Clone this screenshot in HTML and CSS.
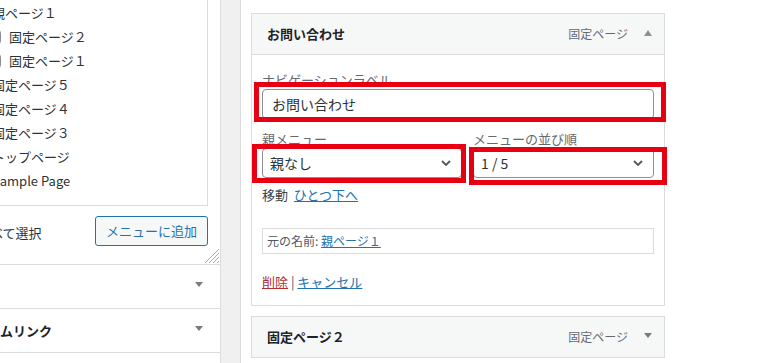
FILE: index.html
```html
<!doctype html>
<html>
<head>
<meta charset="utf-8">
<link rel="stylesheet" href="styles.css">
</head>
<body>
<div class="screen">
	<div class="side">
		<div class="side-inner">
			<div class="picker">
				<ul class="pages">
					<li><span class="cb"></span>親ページ１</li>
					<li class="child"><span class="cb"></span>固定ページ２</li>
					<li class="child"><span class="cb"></span>固定ページ１</li>
					<li><span class="cb"></span>固定ページ５</li>
					<li><span class="cb"></span>固定ページ４</li>
					<li><span class="cb"></span>固定ページ３</li>
					<li><span class="cb"></span>トップページ</li>
					<li><span class="cb"></span>Sample Page</li>
				</ul>
				<div class="picker-actions">
					<label class="select-all"><span class="cb"></span>すべて選択</label>
					<button class="btn">メニューに追加</button>
				</div>
				<svg class="grip" width="14" height="14" viewBox="0 0 14 14">
					<line x1="14" y1="0" x2="0" y2="14"/>
					<line x1="14" y1="4" x2="4" y2="14"/>
					<line x1="14" y1="8" x2="8" y2="14"/>
					<line x1="14" y1="12" x2="12" y2="14"/>
				</svg>
			</div>
			<div class="acc"><h3>投稿</h3><span class="tri"></span></div>
			<div class="acc"><h3>カスタムリンク</h3><span class="tri"></span></div>
			<div class="acc"><h3>カテゴリー</h3><span class="tri"></span></div>
		</div>
	</div>

	<div class="edit">
		<div class="item open">
			<div class="item-head">
				<span class="item-title">お問い合わせ</span>
				<span class="item-type">固定ページ</span>
				<span class="tri up"></span>
			</div>
			<div class="item-body">
				<label class="field">
					<span class="desc">ナビゲーションラベル</span>
					<input class="text" value="お問い合わせ">
				</label>
				<div class="field-row">
					<div class="field">
						<span class="desc">親メニュー</span>
						<div class="select"><span>親なし</span><svg width="10" height="6" viewBox="0 0 10 6"><polyline points="1,1 5,5 9,1"/></svg></div>
					</div>
					<div class="field">
						<span class="desc">メニューの並び順</span>
						<div class="select"><span>1 / 5</span><svg width="10" height="6" viewBox="0 0 10 6"><polyline points="1,1 5,5 9,1"/></svg></div>
					</div>
				</div>
				<p class="move">移動&nbsp; <a href="#">ひとつ下へ</a></p>
				<p class="original">元の名前: <a href="#">親ページ１</a></p>
				<p class="actions"><a class="delete" href="#">削除</a> | <a href="#">キャンセル</a></p>
			</div>
			<span class="mark mark-label"></span>
			<span class="mark mark-parent"></span>
			<span class="mark mark-order"></span>
		</div>

		<div class="item">
			<div class="item-head">
				<span class="item-title">固定ページ２</span>
				<span class="item-type">固定ページ</span>
				<span class="tri"></span>
			</div>
		</div>
	</div>
</div>
</body>
</html>
```

FILE: styles.css
```css
html,body{
	margin: 0;
	font-family: "Noto Sans CJK JP", "Noto Sans", sans-serif;
	font-size: 13px;
	line-height: 18px;
	color: #3c434a;
	background: #f0f0f1;
}

.screen{
	display: flex;
	height: 363px;
	overflow: hidden;
}

.side{
	flex: none;
	width: 220px;
	background: #fff;
	border-right: 1px solid #dcdcde;
	overflow: hidden;
}

.side-inner{
	margin-left: -60px;
}

.picker{
	position: relative;
	padding: 0 12px 18px 0;
}

.pages{
	list-style: none;
	margin: 0;
	padding: 1px 0 12px 28px;
	border-right: 1px solid #dcdcde;
	border-bottom: 1px solid #dcdcde;
}

.pages li{
	display: flex;
	align-items: center;
	gap: 8px;
	height: 24px;
	color: #2c3338;
	white-space: nowrap;
}

.pages li.child{
	padding-left: 17px;
}

.cb{
	flex: none;
	width: 16px;
	height: 16px;
	box-sizing: border-box;
	border: 1px solid #8c8f94;
	border-radius: 4px;
	background: #fff;
}

.picker-actions{
	display: flex;
	justify-content: space-between;
	align-items: center;
	margin-top: 10px;
	padding-left: 14px;
}

.select-all{
	display: flex;
	align-items: center;
	gap: 8px;
	color: #2c3338;
	margin-top: 3px;
}

.btn{
	height: 30px;
	padding: 0 10px;
	border: 1px solid #2271b1;
	border-radius: 3px;
	background: #f6f7f7;
	color: #2271b1;
	font: inherit;
	font-size: 13px;
}

.grip{
	position: absolute;
	right: 1px;
	bottom: 1px;
	stroke: #a7aaad;
	stroke-width: 1;
}

.acc{
	display: flex;
	align-items: center;
	justify-content: space-between;
	height: 43px;
	padding: 0 17px 0 21px;
	border-top: 1px solid #dcdcde;
}

.acc h3{
	margin: 0;
	font-size: 13px;
	font-weight: bold;
	color: #1d2327;
}

.tri{
	width: 0;
	height: 0;
	border-left: 4px solid transparent;
	border-right: 4px solid transparent;
	border-top: 5px solid #787c82;
	margin-top: -4px;
}

.tri.up{
	border-top: 0;
	border-bottom: 6px solid #8c8f94;
	margin-top: -2px;
}

.edit{
	flex: 1;
	margin-left: 19px;
	padding: 13px 10px;
	background: #fff;
	border-left: 1px solid #dcdcde;
}

.item{
	position: relative;
	width: 412px;
	border: 1px solid #dcdcde;
	margin-bottom: 10px;
	background: #fff;
}

.item-head{
	display: flex;
	align-items: center;
	height: 40px;
	padding: 0 12px 0 15px;
	background: #f6f7f7;
}

.open .item-head{
	border-bottom: 1px solid #dcdcde;
}

.item-title{
	flex: 1;
	font-weight: bold;
	color: #1d2327;
}

.item-type{
	margin-right: 16px;
	font-size: 12px;
	color: #646970;
}

.item-body{
	padding: 16px 10px 14px;
}

.field{
	display: block;
}

.desc{
	display: block;
	color: #646970;
}

.text,.select{
	display: block;
	width: 100%;
	height: 30px;
	box-sizing: border-box;
	margin: 0;
	border: 1px solid #8c8f94;
	border-radius: 4px;
	background: #fff;
	font: inherit;
	font-size: 14px;
	color: #2c3338;
}

.text{
	padding: 0 9px;
}

.select{
	display: flex;
	justify-content: space-between;
	align-items: center;
	padding: 0 10px 0 7px;
}

.select svg{
	fill: none;
	stroke: #50575e;
	stroke-width: 1.8;
}

.field-row{
	display: grid;
	grid-template-columns: 200px 1fr;
	gap: 11px;
	margin-top: 11px;
}

.item-body p{
	margin: 0;
}

a{
	color: #2271b1;
}

.move{
	margin-top: 8px !important;
}

.original{
	margin-top: 24px !important;
	height: 26px;
	box-sizing: border-box;
	padding: 3px 4px;
	border: 1px solid #dcdcde;
	font-size: 12px;
	color: #50575e;
}

.actions{
	margin-top: 19px !important;
	color: #50575e;
}

.actions .delete{
	color: #b32d2e;
}

.mark{
	position: absolute;
	box-sizing: border-box;
	border: 5px solid #e60012;
}

.mark-label{
	left: 2px;
	top: 68px;
	width: 412px;
	height: 40px;
}

.mark-parent{
	left: 0;
	top: 130px;
	width: 214px;
	height: 39px;
}

.mark-order{
	left: 217px;
	top: 133px;
	width: 198px;
	height: 38px;
}
```
